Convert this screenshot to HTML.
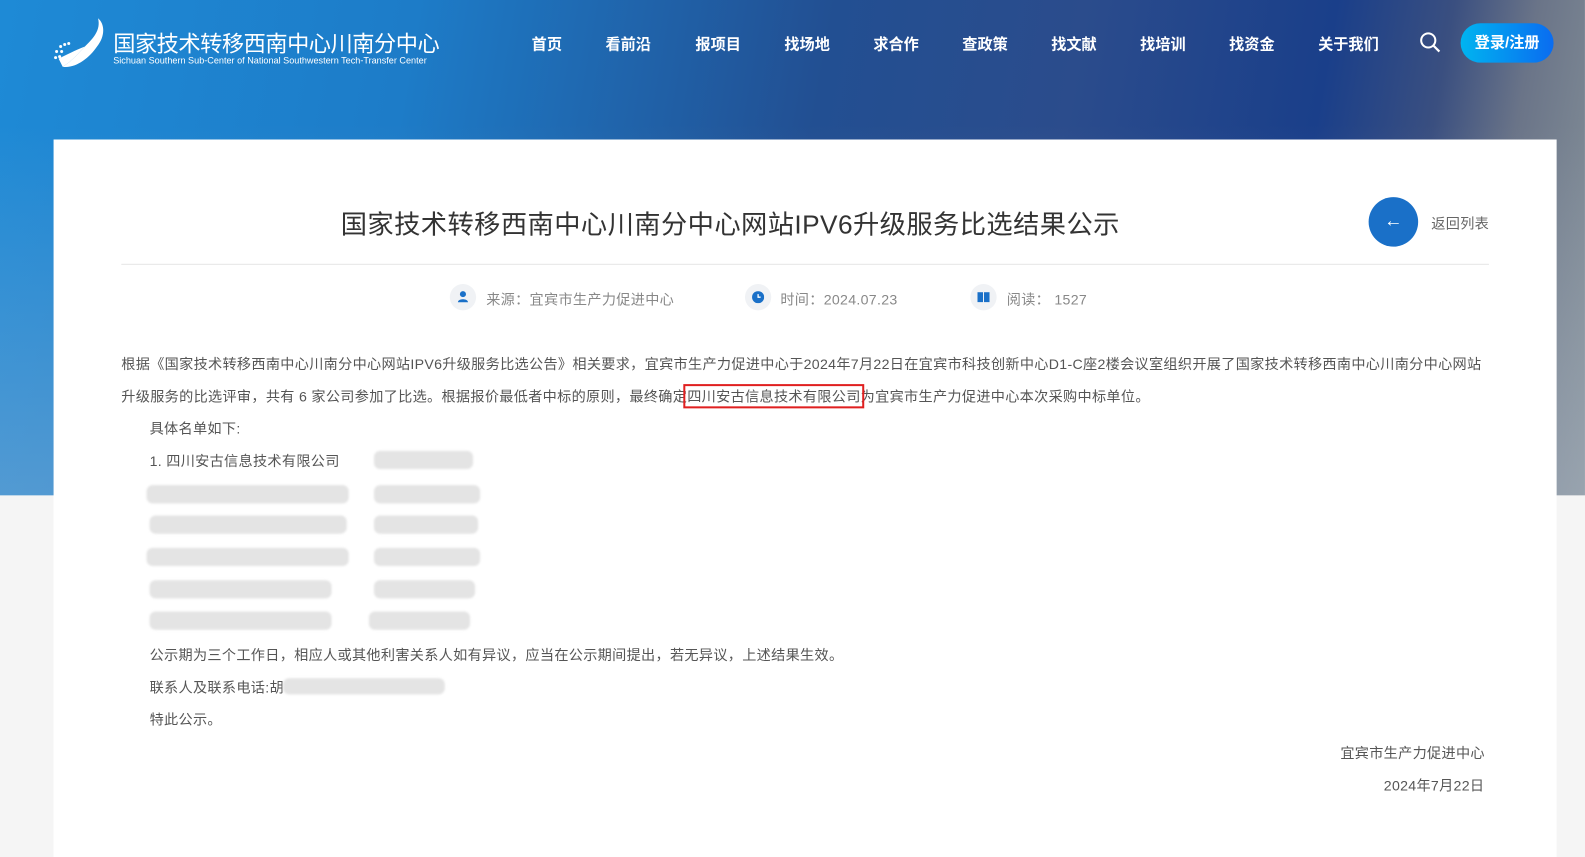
<!DOCTYPE html>
<html><head><meta charset="utf-8"><style>
*{margin:0;padding:0;box-sizing:border-box}
body{width:1585px;height:844px;overflow:hidden;background:#f5f5f5;font-family:"Liberation Sans","Noto Sans CJK SC",sans-serif;position:relative}
#w{position:absolute;left:0;top:0;width:1568px;height:835px;transform:scale(1.0108);transform-origin:0 0}
.banner{position:absolute;left:0;top:0;width:1568px;height:490px;background:linear-gradient(180deg,rgba(0,0,0,0) 0%,rgba(255,255,255,0) 25%,rgba(180,190,210,.35) 100%),linear-gradient(100deg,#1e8ad6 0%,#1d7cc8 25%,#224f92 50%,#2b4c8c 65%,#1a3f8a 80%,#3a4f80 87%,#6a7488 92%,#8a969c 100%)}
.logo{position:absolute;left:52px;top:16px}
.nav{position:absolute;top:33px;color:#fff;font-size:15px;font-weight:bold}
.card{position:absolute;left:53px;top:138px;width:1487px;height:710px;background:#fff}
.title{position:absolute;left:0;width:1445px;top:202px;text-align:center;font-size:26px;color:#333;letter-spacing:0.4px}
.p{position:absolute;font-size:14px;color:#555;white-space:nowrap;letter-spacing:0.3px}
.blur{position:absolute;height:18px;background:#e4e4e4;border-radius:6px;filter:blur(1px)}
.ic{position:absolute;width:26px;height:26px;border-radius:50%;background:#f0f2f5}
</style></head><body><div id="w">
<div class="banner"></div>
<svg class="logo" width="56" height="54" viewBox="0 0 56 54"><path d="M45 2 C52 8 52 20 44 30 C36 42 22 52 10 50 C20 44 26 36 32 30 C40 22 48 14 45 2Z" fill="#fff"/><path d="M32 30 C26 36 20 44 10 50 L6 42 C14 38 22 34 32 30Z" fill="#fff"/><g fill="#fff"><circle cx="8" cy="30" r="1.5"/><circle cx="12" cy="28" r="1.5"/><circle cx="4" cy="35" r="1.5"/><circle cx="9" cy="35" r="1.5"/><circle cx="3" cy="41" r="1.5"/><circle cx="7" cy="40" r="1.5"/><circle cx="16" cy="27" r="1.5"/></g></svg>
<div style="position:absolute;left:112px;top:26px;color:#fff;font-size:22px;letter-spacing:-0.5px">国家技术转移西南中心川南分中心</div>
<div style="position:absolute;left:112px;top:55px;color:#fff;font-size:9px">Sichuan Southern Sub-Center of National Southwestern Tech-Transfer Center</div>
<div class="nav" style="left:526px">首页</div>
<div class="nav" style="left:599px">看前沿</div>
<div class="nav" style="left:688px">报项目</div>
<div class="nav" style="left:776px">找场地</div>
<div class="nav" style="left:864px">求合作</div>
<div class="nav" style="left:952px">查政策</div>
<div class="nav" style="left:1040px">找文献</div>
<div class="nav" style="left:1128px">找培训</div>
<div class="nav" style="left:1216px">找资金</div>
<div class="nav" style="left:1304px">关于我们</div>
<svg style="position:absolute;left:1404px;top:31px" width="22" height="22" viewBox="0 0 22 22"><circle cx="9" cy="9" r="7" fill="none" stroke="#fff" stroke-width="2"/><path d="M14 14 L20 20" stroke="#fff" stroke-width="2.2"/></svg>
<div style="position:absolute;left:1445px;top:23px;width:92px;height:39px;border-radius:20px;background:linear-gradient(90deg,#00b4f0,#0a6cf0);color:#fff;font-size:15px;font-weight:bold;text-align:center;line-height:39px">登录/注册</div>
<div class="card"></div>
<div class="title">国家技术转移西南中心川南分中心网站IPV6升级服务比选结果公示</div>
<div style="position:absolute;left:1354px;top:195px;width:49px;height:49px;border-radius:50%;background:#1a70c8;color:#fff;text-align:center;line-height:47px;font-size:18px">←</div>
<div class="p" style="left:1416px;top:211px;color:#666">返回列表</div>
<div style="position:absolute;left:120px;top:261px;width:1353px;height:1px;background:#e5e5e5"></div>
<div class="ic" style="left:445px;top:281px"></div><svg style="position:absolute;left:452px;top:287px" width="12" height="13" viewBox="0 0 12 13"><circle cx="6" cy="4" r="3" fill="#1a70c8"/><path d="M1 12 C1 8 11 8 11 12Z" fill="#1a70c8"/></svg>
<div class="p" style="left:481px;top:286px;color:#888">来源：宜宾市生产力促进中心</div>
<div class="ic" style="left:737px;top:281px"></div><svg style="position:absolute;left:744px;top:288px" width="12" height="12" viewBox="0 0 12 12"><circle cx="6" cy="6" r="6" fill="#1a70c8"/><path d="M6 3 V6 H8.5" stroke="#fff" stroke-width="1.3" fill="none"/></svg>
<div class="p" style="left:772px;top:286px;color:#888">时间：2024.07.23</div>
<div class="ic" style="left:960px;top:281px"></div><svg style="position:absolute;left:967px;top:289px" width="12" height="10" viewBox="0 0 12 10"><rect x="0" y="0" width="5.5" height="10" fill="#1a70c8"/><rect x="6.5" y="0" width="5.5" height="10" fill="#1a70c8"/></svg>
<div class="p" style="left:996px;top:286px;color:#888">阅读： 1527</div>
<div class="p" style="left:120px;top:350px">根据《国家技术转移西南中心川南分中心网站IPV6升级服务比选公告》相关要求，宜宾市生产力促进中心于2024年7月22日在宜宾市科技创新中心D1-C座2楼会议室组织开展了国家技术转移西南中心川南分中心网站</div>
<div class="p" style="left:120px;top:382px">升级服务的比选评审，共有 6 家公司参加了比选。根据报价最低者中标的原则，最终确定<span style="outline:2px solid #e02020;outline-offset:2px">四川安古信息技术有限公司</span>为宜宾市生产力促进中心本次采购中标单位。</div>
<div class="p" style="left:148px;top:414px">具体名单如下:</div>
<div class="p" style="left:148px;top:446px">1. 四川安古信息技术有限公司</div>
<div class="blur" style="left:370px;top:446px;width:98px"></div>
<div class="blur" style="left:145px;top:480px;width:200px"></div><div class="blur" style="left:370px;top:480px;width:105px"></div>
<div class="blur" style="left:148px;top:510px;width:195px"></div><div class="blur" style="left:370px;top:510px;width:103px"></div>
<div class="blur" style="left:145px;top:542px;width:200px"></div><div class="blur" style="left:370px;top:542px;width:105px"></div>
<div class="blur" style="left:148px;top:574px;width:180px"></div><div class="blur" style="left:370px;top:574px;width:100px"></div>
<div class="blur" style="left:148px;top:605px;width:180px"></div><div class="blur" style="left:365px;top:605px;width:100px"></div>
<div class="p" style="left:148px;top:638px">公示期为三个工作日，相应人或其他利害关系人如有异议，应当在公示期间提出，若无异议，上述结果生效。</div>
<div class="p" style="left:148px;top:670px">联系人及联系电话:胡</div>
<div class="blur" style="left:280px;top:671px;width:160px;height:16px"></div>
<div class="p" style="left:148px;top:702px">特此公示。</div>
<div class="p" style="left:1326px;top:735px">宜宾市生产力促进中心</div>
<div class="p" style="left:1369px;top:767px">2024年7月22日</div>
</div></body></html>
